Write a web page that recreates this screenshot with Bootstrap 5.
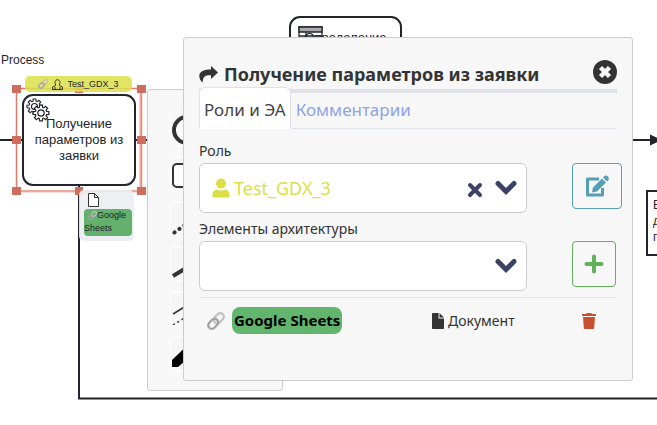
<!DOCTYPE html>
<html lang="ru">
<head>
<meta charset="utf-8">
<meta name="viewport" content="width=device-width, initial-scale=1">
<title>Получение параметров из заявки</title>
<link href="https://cdn.jsdelivr.net/npm/bootstrap@5.3.0/dist/css/bootstrap.min.css" rel="stylesheet">
<style>
  body { font-family: "Noto Sans", sans-serif; color: #333; background: #fff; }
  svg { display: block; flex: none; }

  /* diagram canvas */
  .canvas { font-family: "Liberation Sans", sans-serif; color: #22242a; font-size: 12px; line-height: 16px; }
  .canvas > * { position: absolute; }
  .wires { left: 0; top: 0; width: 100%; height: 100%; }
  .pool-name { left: 1px; top: 52px; }
  .task-a { left: 22px; top: 94px; width: 114px; height: 92px; border: 2px solid #22242a; border-radius: 11px; font-size: 13px; padding-top: 20px; }
  .task-b { left: 289px; top: 16px; width: 113px; height: 90px; border: 2px solid #22242a; border-radius: 11px; font-size: 13px; padding-top: 12px; }
  .task-c { left: 646px; top: 190px; width: 120px; height: 66px; border: 2px solid #22242a; padding: 5px; }
  .task-icon { position: absolute; }
  .task-a .task-icon { left: 2px; top: 2px; }
  .task-b .task-icon { left: 7px; top: 8px; }
  .role-tag { left: 25px; top: 76px; width: 107px; height: 16px; border-radius: 5px; background: rgba(220, 225, 75, .85); font-size: 9px; gap: 4px; }
  .doc-tag { left: 79px; top: 190px; width: 55px; height: 51px; border-radius: 5px; background: rgba(236, 238, 241, .92); padding: 3px 2px 5px 5px; font-size: 9px; line-height: 13px; }
  .doc-name { background: #64b06d; border-radius: 4px; height: 27px; margin-top: 2px; }
  .doc-name svg { display: inline-block; }
  .handles { left: 12px; top: 84px; }

  /* replacement palette */
  .palette { left: 147px; top: 89px; width: 136px; padding: 21px 21px 18px; background: #f7f7f7; border: 1px solid #ccc; border-radius: 3px; gap: 9px; }
  .tile { width: 36px; height: 36px; padding: 0; border: 2px solid #fbfbfb; border-radius: 5px; background: #f6f6f6; }

  /* properties window */
  .props { position: absolute; left: 183px; right: 24px; top: 37px; padding: 0 15px 37px; background: #f7f7f7; border: 1px solid #ccc; border-radius: 3px; }
  .props-head { padding-top: 20px; height: 55px; gap: 6px; border-bottom: 4px solid #dee2e6; }
  .props-head h1 { font-size: 18px; line-height: 32px; }
  .props-tabs { margin-top: -6px; border-bottom: 1px solid #dee2e6; }
  .props-tabs .nav-link { font-size: 17px; line-height: 24px; padding: 10px 4px 6px; color: #8fa2ec; border-radius: 6px 6px 0 0; }
  .props-tabs .nav-link.active { color: #444; background: #fff; border-color: #dee2e6 #dee2e6 #fff; }
  .props-form { padding-top: 6px; }
  .field-label { font-size: 14px; line-height: 20px; padding-top: 6px; margin-bottom: 2px; }
  .field-row { gap: 45px; margin-right: -5px; }
  .picker { height: 50px; background: #fff; border: 1px solid #ccc; border-radius: 6px; padding: 0 9px 0 12px; }
  .picker select { appearance: none; border: 0; background: none; min-width: 0; font-size: 18px; color: #dbdf45; padding: 0 4px; }
  .btn-edit, .btn-plus { height: 46px; padding: 0; border-radius: 4px; }
  .btn-edit { width: 50px; color: #569fb8; border-color: #569fb8; }
  .btn-plus { width: 44px; color: #62b058; border-color: #62b058; }
  .btn-slot { width: 50px; }
  .elements { table-layout: fixed; font-size: 14px; line-height: 27px; border-top: 1px solid #dee2e6; margin-top: 6px; }
  .elements td { padding: 9px 0; }
  .col-icon { width: 33px; }
  .col-kind { width: 150px; }
  .col-del { width: 35px; }
  .elem-name { background: #61b56c; color: #000; border-radius: 8px; padding: 0 2px; font-size: 15px; font-weight: 700; display: inline-block; }
</style>
<script src="https://cdn.jsdelivr.net/npm/bootstrap@5.3.0/dist/js/bootstrap.bundle.min.js"></script>
</head>
<body>
<div class="position-relative vh-100 overflow-hidden">

  <svg width="0" height="0" class="position-absolute" aria-hidden="true">
    <symbol id="link" viewBox="0 0 16 16">
      <g fill="none" stroke-width="2" transform="rotate(-45 8 8)">
        <rect x="6.500" y="4.800" width="10" height="6.400" rx="3.200" stroke="#c2c2c2"/>
        <rect x="-.5" y="4.800" width="10" height="6.400" rx="3.200" stroke="#a2a2a2"/>
      </g>
    </symbol>
    <symbol id="chevron" viewBox="0 0 22 16">
      <path d="M3 3.500 11 11.500 19 3.500" fill="none" stroke="#3d4166" stroke-width="5" stroke-linecap="round"/>
    </symbol>
    <symbol id="gear" viewBox="-9 -9 18 18">
      <g fill="#fff" stroke="#22242a" stroke-width="1.200">
        <path d="M7.900-1.400 7.900 1.400 5.600 1.600 5.100 2.800 6.600 4.600 4.600 6.600 2.800 5.100 1.600 5.600 1.400 7.900-1.400 7.900-1.600 5.600-2.800 5.100-4.600 6.600-6.600 4.600-5.100 2.800-5.600 1.600-7.900 1.400-7.900-1.400-5.600-1.600-5.100-2.800-6.600-4.600-4.600-6.600-2.800-5.100-1.600-5.600-1.400-7.900 1.400-7.900 1.600-5.600 2.800-5.100 4.600-6.600 6.600-4.600 5.100-2.800 5.600-1.600Z"/>
        <circle r="3.200"/>
      </g>
    </symbol>
  </svg>

  <main class="canvas position-absolute w-100 h-100">
    <svg class="wires" aria-hidden="true">
      <g fill="none" stroke="#22242a" stroke-width="2">
        <path d="M0 140H22M136 140H660M79 186V398.500H2000"/>
      </g>
      <path d="M650 134.500 662 140 650 145.500Z" fill="#22242a"/>
    </svg>
    <div class="pool-name">Process</div>

    <div class="task-a text-center bg-white">
      <svg class="task-icon" width="25" height="25" viewBox="0 0 25 25" aria-hidden="true">
        <use href="#gear" x="0" y="0" width="17" height="17"/>
        <use href="#gear" x="6" y="6" width="18" height="18"/>
      </svg>
      <div class="position-relative">Получение<br>параметров из<br>заявки</div>
    </div>

    <div class="task-b text-center bg-white">
      <svg class="task-icon" width="25" height="20" viewBox="0 0 25 20" fill="#fff" stroke="#22242a" stroke-width="1.300">
        <path d="M1 1H24V19H1Z"/><path d="M1 1H24V6H1Z" fill="#aaa"/><path d="M1 10H24M1 14.500H24M8 6V19"/>
      </svg>
      <div class="position-relative">Определение</div>
    </div>

    <div class="task-c bg-white">В<br>д<br>п</div>

    <svg class="handles" width="134" height="112" viewBox="0 0 134 112" aria-hidden="true">
      <rect x="4.500" y="4.500" width="125" height="103" fill="none" stroke="#e0766c" stroke-width="1.500"/>
      <path d="M128.500 5V107M5 107H129" stroke="#e8a89c" stroke-width="2"/>
      <g fill="#cc6d5d">
        <path d="M0 1h9v8H0zM125 1h9v8h-9zM0 52h9v8H0zM125 52h9v8h-9zM0 103h9v8H0zM125 103h9v8h-9zM63 103h8v8h-8zM63 1h8v8h-8z"/>
      </g>
    </svg>

    <div class="role-tag d-flex align-items-center justify-content-center">
      <svg width="10" height="10"><use href="#link"/></svg>
      <svg width="11" height="11" viewBox="0 0 11 11" fill="none" stroke="#333"><path d="M.5 10.500V8L3.800 6.200C2.300 3.500 3 .8 5.500.8S8.700 3.500 7.200 6.200L10.500 8V10.500ZM3 8V10M8 8V10"/></svg>
      <span>Test_GDX_3</span>
    </div>

    <div class="doc-tag">
      <svg class="ms-1" width="11" height="14" viewBox="0 0 11 14" fill="#fff" stroke="#333"><path d="M.5.5H6.500L10.500 4.500V13.500H.5ZM6.500.5V4.500H10.500"/></svg>
      <div class="doc-name"><svg width="9" height="9" class="ms-1 me-0"><use href="#link"/></svg>Google Sheets</div>
    </div>

    <div class="palette d-flex flex-column">
      <button class="tile" type="button" aria-label="Событие"><svg width="32" height="32"><circle cx="16" cy="17" r="13" fill="#fff" stroke="#333" stroke-width="4"/></svg></button>
      <button class="tile" type="button" aria-label="Задача"><svg width="32" height="32"><rect x="2" y="6" width="28" height="23" rx="4" fill="#fff" stroke="#333" stroke-width="2"/></svg></button>
      <button class="tile" type="button" aria-label="Ассоциация"><svg width="32" height="32"><path d="M3.500 29.500 30 10" stroke="#333" stroke-width="4" stroke-linecap="round" stroke-dasharray=".1 6"/></svg></button>
      <button class="tile" type="button" aria-label="Линия"><svg width="32" height="32"><path d="M2 28 30 11" stroke="#333" stroke-width="4"/></svg></button>
      <button class="tile" type="button" aria-label="Двойная линия"><svg width="32" height="32" stroke="#333" stroke-width="1.500"><path d="M2 21 28 5"/><path d="M2 32 28 16" stroke-dasharray="2 3"/></svg></button>
      <button class="tile" type="button" aria-label="Цвет"><svg width="32" height="32"><path d="M1 22 22 2 30 9 7 29H1Z" fill="#000"/></svg></button>
    </div>
  </main>

  <section class="props" aria-labelledby="props-title">
    <header class="props-head d-flex align-items-start">
      <svg class="mt-2" width="19" height="18" viewBox="0 0 19 18" aria-hidden="true"><path d="M12 0 19 6.500 12 13V9.200C6.500 9 3.500 10.500 3.800 16.500 1.500 15 .3 12.500.3 10 .3 5.200 5.500 3.500 12 3.500Z" fill="#333"/></svg>
      <h1 id="props-title" class="fw-bold mb-0 flex-grow-1 text-nowrap">Получение параметров из заявки</h1>
      <button type="button" class="btn p-0 border-0 mt-0" aria-label="Закрыть">
        <svg width="24" height="28" viewBox="0 0 24 28"><circle cx="12" cy="14" r="12" fill="#333"/><path d="M7.500 9.500 16.500 18.500M16.500 9.500 7.500 18.500" stroke="#f7f7f7" stroke-width="4.500"/></svg>
      </button>
    </header>

    <ul class="nav nav-tabs props-tabs flex-nowrap text-nowrap">
      <li class="nav-item"><a class="nav-link active" href="#roles" aria-current="page">Роли и ЭА</a></li>
      <li class="nav-item"><a class="nav-link" href="#comments">Комментарии</a></li>
    </ul>

    <form id="roles" class="props-form mb-0">
      <label for="role" class="field-label d-block">Роль</label>
      <div class="field-row d-flex">
        <div class="picker d-flex align-items-center flex-grow-1">
          <svg width="18" height="20" viewBox="0 0 18 20" fill="#dbdf45" aria-hidden="true"><circle cx="9" cy="5.500" r="5"/><path d="M.5 19.500V16.500C.5 13 3 11.500 5 11.500 7.500 12.700 10.500 12.700 13 11.500 15 11.500 17.500 13 17.500 16.500V19.500Z"/></svg>
          <select id="role" class="flex-grow-1"><option>Test_GDX_3</option></select>
          <button type="button" class="btn p-0 border-0 me-2 pe-1 pt-1" aria-label="Очистить">
            <svg width="16" height="16" viewBox="0 0 16 16"><path d="M3 3 13 13M13 3 3 13" stroke="#3d4166" stroke-width="4" stroke-linecap="round"/></svg>
          </button>
          <svg width="22" height="16" aria-hidden="true"><use href="#chevron"/></svg>
        </div>
        <div class="btn-slot">
          <button type="button" class="btn btn-edit d-flex align-items-center justify-content-center" aria-label="Изменить">
            <svg width="24" height="22" viewBox="0 0 24 22"><path d="M14 4H2.500V20H17.500V13" fill="none" stroke="currentColor" stroke-width="3" stroke-linejoin="round"/><path d="M7 17.500 8 12.500 17 3.500 21 7.500 12 16.500ZM18 2.500 19.500 1C20.500 0 22 .5 23 1.500S24 4 23.500 5L22 6.500Z" fill="currentColor"/></svg>
          </button>
        </div>
      </div>

      <label for="element" class="field-label d-block">Элементы архитектуры</label>
      <div class="field-row d-flex">
        <div class="picker d-flex align-items-center flex-grow-1">
          <select id="element" class="flex-grow-1"><option></option></select>
          <svg width="22" height="16" aria-hidden="true"><use href="#chevron"/></svg>
        </div>
        <div class="btn-slot">
          <button type="button" class="btn btn-plus d-flex align-items-center justify-content-center" aria-label="Добавить">
            <svg width="20" height="20" viewBox="0 0 20 20"><path d="M10 2.500V17.500M2.500 10H17.500" stroke="currentColor" stroke-width="4" stroke-linecap="round"/></svg>
          </button>
        </div>
      </div>
    </form>

    <table class="elements w-100">
      <colgroup><col class="col-icon"><col><col class="col-kind"><col class="col-del"></colgroup>
      <tbody>
        <tr>
          <td><svg class="ms-2" width="18" height="18" aria-hidden="true"><use href="#link"/></svg></td>
          <td><span class="elem-name">Google Sheets</span></td>
          <td>
            <div class="d-flex align-items-center gap-1">
              <svg width="12" height="16" viewBox="0 0 12 16" fill="#333" aria-hidden="true"><path d="M0 1C0 .4.4 0 1 0H6.500V5.500H12V15C12 15.600 11.600 16 11 16H1C.4 16 0 15.600 0 15ZM7.500 0 12 4.500H7.500Z"/></svg>
              <span>Документ</span>
            </div>
          </td>
          <td>
            <button type="button" class="btn p-0 border-0 d-flex" aria-label="Удалить">
              <svg width="14" height="16" viewBox="0 0 14 16" fill="#c9502f"><path d="M0 1H4L5 0H9L10 1H14V3H0ZM1 4H13L12.200 14.700C12.100 15.500 11.600 16 10.800 16H3.200C2.400 16 1.900 15.500 1.800 14.700Z"/></svg>
            </button>
          </td>
        </tr>
      </tbody>
    </table>
  </section>
</div>
</body>
</html>
